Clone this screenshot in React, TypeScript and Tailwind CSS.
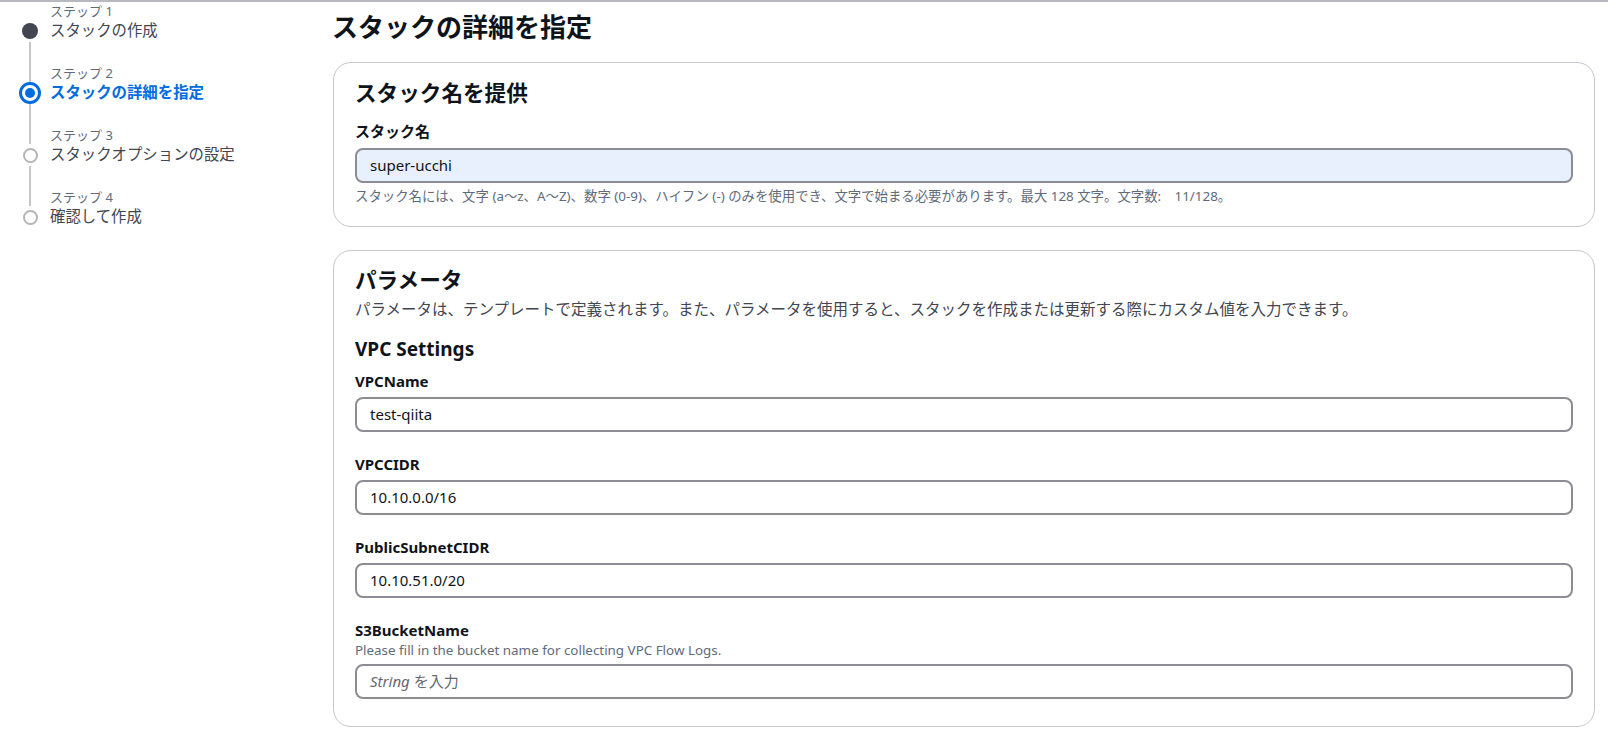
const steps = [
  { n: 1, name: 'スタックの作成', state: 'done' },
  { n: 2, name: 'スタックの詳細を指定', state: 'active' },
  { n: 3, name: 'スタックオプションの設定', state: 'todo' },
  { n: 4, name: '確認して作成', state: 'todo' },
];

const params = [
  { label: 'VPCName', value: 'test-qiita' },
  { label: 'VPCCIDR', value: '10.10.0.0/16' },
  { label: 'PublicSubnetCIDR', value: '10.10.51.0/20' },
];

function StepDot({ state }: { state: string }) {
  if (state === 'done') return <div className="w-[16px] h-[16px] rounded-full bg-[#424650]" />;
  if (state === 'active')
    return (
      <div className="w-[22px] h-[22px] rounded-full border-[3px] border-[#006ce0] flex items-center justify-center">
        <div className="w-[10px] h-[10px] rounded-full bg-[#006ce0]" />
      </div>
    );
  return <div className="w-[15px] h-[15px] rounded-full border-2 border-[#b4b4bb] bg-white" />;
}

function Stepper() {
  return (
    <nav className="pl-[19px]">
      {steps.map((s, i) => (
        <div key={s.n} className="flex">
          <div className="w-[22px] flex flex-col items-center">
            <div className={`h-[18px] w-[2px] ${i === 0 ? '' : 'bg-[#c6c6cd]'}`} />
            <div className="h-[22px] flex items-center justify-center">
              <StepDot state={s.state} />
            </div>
            <div className={`flex-1 w-[2px] ${i === steps.length - 1 ? '' : 'bg-[#c6c6cd]'}`} />
          </div>
          <div className="ml-[9px] pb-[22px]">
            <div className="text-[13px] leading-[18px] text-[#5f6b7a]">ステップ {s.n}</div>
            <div
              className={`text-[15.4px] leading-[22px] ${
                s.state === 'active' ? 'font-bold text-[#006ce0]' : 'text-[#424650]'
              }`}
            >
              {s.name}
            </div>
          </div>
        </div>
      ))}
    </nav>
  );
}

function Input({ value, filled }: { value?: string; filled?: boolean }) {
  return (
    <div
      className={`h-[35px] rounded-[8px] border-2 border-[#8c8c94] px-[13px] flex items-center text-[15px] ${
        filled ? 'bg-[#e8f0fd]' : 'bg-white'
      }`}
    >
      {value ? (
        <span className="text-[#0f141a]">{value}</span>
      ) : (
        <span className="text-[#656871]">
          <i>String</i> を入力
        </span>
      )}
    </div>
  );
}

export default function App() {
  return (
    <div
      className="h-[733px] overflow-hidden bg-white border-t-2 border-[#b8b8c0] flex"
      style={{ fontFamily: '"Noto Sans", "Noto Sans CJK JP", sans-serif' }}
    >
      <aside className="w-[332px] shrink-0">
        <Stepper />
      </aside>
      <main className="flex-1 pr-[13px] text-[#0f141a]">
        <h1 className="mt-[8px] text-[26px] leading-[34px] font-bold">スタックの詳細を指定</h1>

        <section className="mt-[18px] ml-[1px] rounded-[18px] border border-[#c6c6cd] px-[21px] pt-[15px] pb-[21px]">
          <h2 className="text-[21.6px] leading-[30px] font-bold">スタック名を提供</h2>
          <div className="mt-[12px] text-[15px] leading-[22px] font-bold">スタック名</div>
          <div className="mt-[6px]">
            <Input value="super-ucchi" filled />
          </div>
          <p className="mt-[4px] text-[13.4px] leading-[18px] text-[#5f6b7a]">
            スタック名には、文字 (a～z、A～Z)、数字 (0-9)、ハイフン (-) のみを使用でき、文字で始まる必要があります。最大 128 文字。文字数:　11/128。
          </p>
        </section>

        <section className="mt-[23px] ml-[1px] rounded-[18px] border border-[#c6c6cd] px-[21px] pt-[14px] pb-[27px]">
          <h2 className="text-[21.6px] leading-[30px] font-bold">パラメータ</h2>
          <p className="mt-[3px] text-[15.5px] leading-[22px] text-[#424650]">
            パラメータは、テンプレートで定義されます。また、パラメータを使用すると、スタックを作成または更新する際にカスタム値を入力できます。
          </p>
          <h3 className="mt-[16px] text-[19px] leading-[26px] font-bold">VPC Settings</h3>
          <div className="mt-[8px] flex flex-col gap-[21px]">
            {params.map((p) => (
              <div key={p.label}>
                <div className="text-[15px] leading-[22px] font-bold">{p.label}</div>
                <div className="mt-[5px]">
                  <Input value={p.value} />
                </div>
              </div>
            ))}
            <div>
              <div className="text-[15px] leading-[22px] font-bold">S3BucketName</div>
              <div className="text-[13.4px] leading-[18px] text-[#5f6b7a]">
                Please fill in the bucket name for collecting VPC Flow Logs.
              </div>
              <div className="mt-[5px]">
                <Input />
              </div>
            </div>
          </div>
        </section>
      </main>
    </div>
  );
}
